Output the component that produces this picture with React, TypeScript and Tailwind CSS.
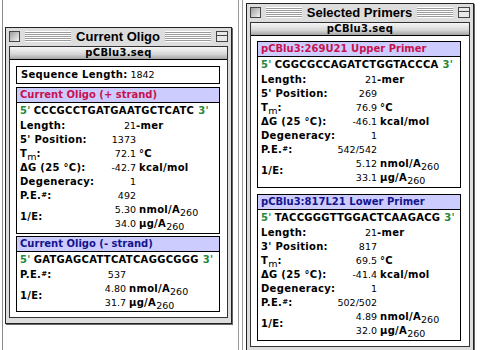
import { ReactNode } from 'react'

const RED = 'text-[#c8124e]'
const NAVY = 'text-[#14148c]'
const B = 'font-bold text-[10px] tracking-[0.3px]'

const Stripes = () => (
  <span className="h-[11px] flex-1 bg-[repeating-linear-gradient(to_bottom,#ffffff_0px,#ffffff_1px,#9a9a9a_1px,#9a9a9a_2px)]" />
)

const TitleBar = ({ title }: { title: string }) => (
  <div className="flex h-[17px] items-center gap-[5px] px-[3px]">
    <span className="h-[11px] w-[11px] border border-[#444] bg-[linear-gradient(135deg,#9c9c9c,#f4f4f4)]" />
    <Stripes />
    <span className="font-['Liberation_Sans',sans-serif] text-[13px] leading-none font-bold">
      {title}
    </span>
    <Stripes />
    <span className="flex h-[11px] w-[12px] flex-col border border-[#444] bg-[#e8e8e8]">
      <span className="h-[4px] border-b border-[#444]" />
    </span>
  </div>
)

const Window = ({ title, children }: { title: string; children: ReactNode }) => (
  <div className="border border-[#222] bg-[#dddddd] shadow-[1px_1px_0_#666]">
    <TitleBar title={title} />
    <div className="px-[3px] pt-[1px] pb-[5px]">
      <div className="border border-[#333] bg-white">
        <div className={`flex h-[13px] items-center justify-center border-b border-black bg-[linear-gradient(to_bottom,#f6f6f6,#d6d6d6_60%,#a4a4a4)] ${B}`}>
          pCBlu3.seq
        </div>
        {children}
      </div>
    </div>
  </div>
)

const Seq = ({ seq }: { seq: string }) => (
  <div className={`flex h-[16px] items-center pl-[3px] ${B}`}>
    <span className="text-[#23873a]">5'</span>
    <span className="ml-[3px]">{seq}</span>
    <span className="ml-[4px] text-[#23873a]">3'</span>
  </div>
)

const A260 = () => (
  <>
    A<span className="relative top-[3px] text-[9.5px] font-normal tracking-normal">260</span>
  </>
)

interface RowProps {
  label: ReactNode
  value: ReactNode
  unit?: ReactNode
  narrow?: boolean
  tight?: boolean
}

// one line box per row so label, number and unit share a baseline
const Row = ({ label, value, unit, narrow, tight }: RowProps) => (
  <div className="h-[14px] pl-[3px] leading-[14px] whitespace-nowrap">
    <span className={`inline-block w-[68px] ${B}`}>{label}</span>
    <span className={narrow ? 'inline-block w-[38px] text-right' : 'inline-block w-[48px] text-right'}>
      {value}
    </span>
    {unit && <span className={tight ? B : `pl-[3px] ${B}`}>{unit}</span>}
  </div>
)

const ERow = ({ nmol, ug, narrow }: { nmol: string; ug: string; narrow?: boolean }) => (
  <div className="flex h-[28px] items-center pl-[3px]">
    <span className={`w-[68px] ${B}`}>1/E:</span>
    <div className="flex flex-col">
      <Line value={nmol} narrow={narrow} unit={<>nmol/<A260 /></>} />
      <Line value={ug} narrow={narrow} unit={<>µg/<A260 /></>} />
    </div>
  </div>
)

const Line = ({ value, unit, narrow }: { value: string; unit: ReactNode; narrow?: boolean }) => (
  <div className="h-[14px] leading-[14px] whitespace-nowrap">
    <span className={narrow ? 'inline-block w-[38px] text-right' : 'inline-block w-[48px] text-right'}>
      {value}
    </span>
    <span className={`pl-[3px] ${B}`}>{unit}</span>
  </div>
)

const Tm = () => (
  <>
    T<span className="relative top-[3px] text-[9.5px] font-normal tracking-normal">m</span>:
  </>
)

const PE = () => (
  <>
    P.E.<span className="relative -top-[2px] text-[7px] leading-none">#</span>:
  </>
)

const Header = ({ text, color }: { text: string; color: string }) => (
  <div className={`h-[15px] border-b border-black bg-[#ccccff] pl-[3px] text-[10px] leading-[14px] font-bold ${color}`}>
    {text}
  </div>
)

interface PrimerProps {
  title: string
  color: string
  seq: string
  posLabel: string
  pos: string
  tm: string
  dg: string
  pe: string
  nmol: string
  ug: string
}

const PrimerBox = (p: PrimerProps) => (
  <div className="border border-black pb-[2px]">
    <Header text={p.title} color={p.color} />
    <Seq seq={p.seq} />
    <Row label="Length:" value="21" unit="-mer" tight />
    <Row label={p.posLabel} value={p.pos} />
    <Row label={<Tm />} value={p.tm} unit="°C" />
    <Row label="ΔG (25 °C):" value={p.dg} unit="kcal/mol" />
    <Row label="Degeneracy:" value="1" />
    <Row label={<PE />} value={p.pe} />
    <ERow nmol={p.nmol} ug={p.ug} />
  </div>
)

export default function App() {
  return (
    <div className="flex h-[350px] w-[480px] overflow-hidden bg-white font-['DejaVu_Sans',sans-serif] text-[9.5px] leading-none text-black">
      <div className="ml-[2px] w-px bg-[#8a8a8a]" />
      <div className="mt-[27px] ml-[2px] w-[227px] self-start">
        <Window title="Current Oligo">
          <div className="flex flex-col gap-[3px] pt-[6px] pr-[7px] pb-[5px] pl-[6px]">
            <div className="flex h-[18px] items-center border border-black pl-[4px]">
              <span className={B}>Sequence Length:</span>
              <span className="ml-[3px]">1842</span>
            </div>
            <div className="flex flex-col gap-[2px]">
              <div className="border border-black pb-[2px]">
                <Header text="Current Oligo (+ strand)" color={RED} />
                <Seq seq="CCCGCCTGATGAATGCTCATC" />
                <Row label="Length:" value="21" unit="-mer" tight />
                <Row label="5' Position:" value="1373" />
                <Row label={<Tm />} value="72.1" unit="°C" />
                <Row label="ΔG (25 °C):" value="-42.7" unit="kcal/mol" />
                <Row label="Degeneracy:" value="1" />
                <Row label={<PE />} value="492" />
                <ERow nmol="5.30" ug="34.0" />
              </div>
              <div className="border border-black pb-px">
                <Header text="Current Oligo (- strand)" color={NAVY} />
                <Seq seq="GATGAGCATTCATCAGGCGGG" />
                <Row label={<PE />} value="537" narrow />
                <ERow nmol="4.80" ug="31.7" narrow />
              </div>
            </div>
          </div>
        </Window>
      </div>
      <div className="ml-[6px] w-px bg-[#9a9a9a]" />
      <div className="ml-[3px] w-px bg-[#9a9a9a]" />
      <div className="mt-[3px] ml-[3px] w-[228px] self-start">
        <Window title="Selected Primers">
          <div className="flex flex-col gap-[6px] pt-[5px] pr-[8px] pb-[5px] pl-[6px]">
            <PrimerBox
              title="pCBlu3:269U21 Upper Primer"
              color={RED}
              seq="CGGCGCCAGATCTGGTACCCA"
              posLabel="5' Position:"
              pos="269"
              tm="76.9"
              dg="-46.1"
              pe="542/542"
              nmol="5.12"
              ug="33.1"
            />
            <PrimerBox
              title="pCBlu3:817L21 Lower Primer"
              color={NAVY}
              seq="TACCGGGTTGGACTCAAGACG"
              posLabel="3' Position:"
              pos="817"
              tm="69.5"
              dg="-41.4"
              pe="502/502"
              nmol="4.89"
              ug="32.0"
            />
          </div>
        </Window>
      </div>
    </div>
  )
}
